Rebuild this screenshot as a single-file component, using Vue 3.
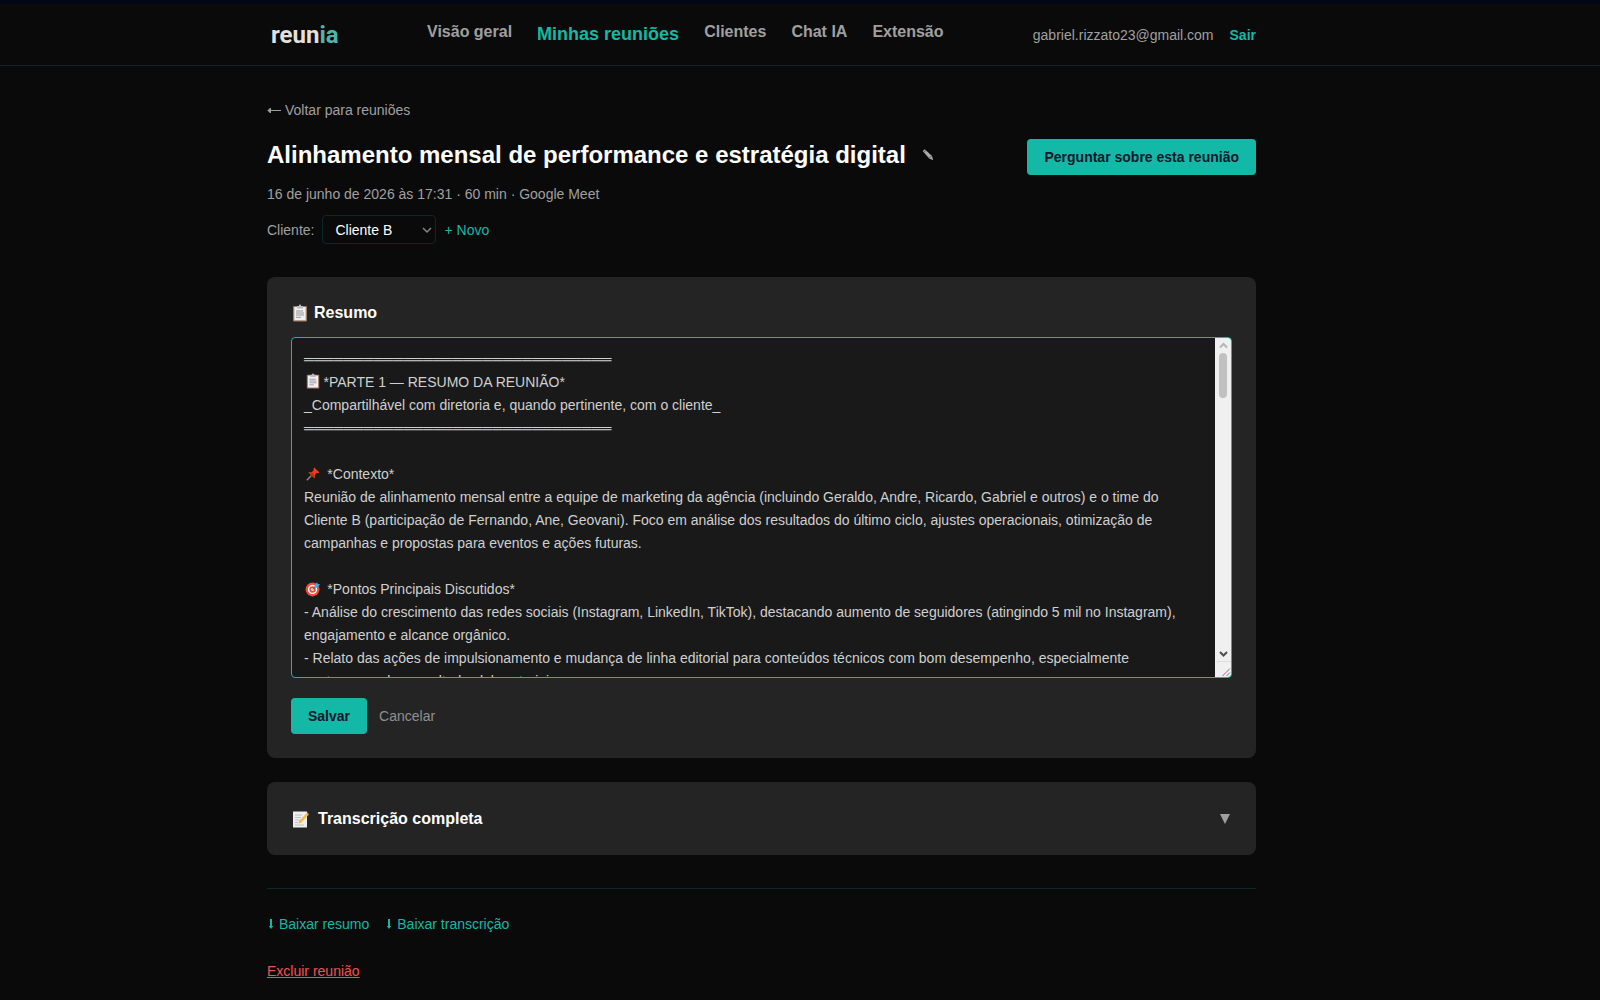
<template>
  <div class="page">
    <header class="topbar">
      <div class="container topbar-inner">
        <a class="logo" href="#">reun<span class="logo-accent">ia</span></a>
        <nav class="nav">
          <a
            v-for="item in navItems"
            :key="item"
            href="#"
            :class="['nav-link', { active: item === activeItem }]"
          >{{ item }}</a>
        </nav>
        <div class="account">
          <span>gabriel.rizzato23@gmail.com</span>
          <button type="button" class="logout">Sair</button>
        </div>
      </div>
    </header>

    <main class="main">
      <div class="container">
        <a class="back" href="#">
          <svg width="14" height="8" viewBox="0 0 14 8" aria-hidden="true">
            <path d="M3.5 2 L1 4.5 L3.5 7 Z M1 4.5 H14" fill="currentColor" stroke="currentColor" />
          </svg>
          Voltar para reuniões
        </a>

        <div class="heading">
          <h1 class="title">Alinhamento mensal de performance e estratégia digital</h1>
          <button type="button" class="edit" aria-label="Editar título">
            <svg width="12" height="12" viewBox="0 0 12 12">
              <path d="M.6 2 L2.8 .2 L10 7 L11.2 11.2 L7.2 9.4 Z" fill="#aaa" />
              <path d="M1.8 3.2 L4 1.3 M7.2 9 L9.7 7" stroke="#444" stroke-width=".7" />
            </svg>
          </button>
          <button type="button" class="btn ask">Perguntar sobre esta reunião</button>
        </div>

        <p class="meta">16 de junho de 2026 às 17:31 · 60 min · Google Meet</p>

        <div class="client">
          <label for="client">Cliente:</label>
          <div class="select-wrap">
            <select id="client" v-model="client" class="select">
              <option>Cliente B</option>
            </select>
            <svg class="select-arrow" width="10" height="6" viewBox="0 0 10 6" aria-hidden="true">
              <path d="M1 1 L5 5 L9 1" fill="none" stroke="#8a8a8a" stroke-width="1.4" />
            </svg>
          </div>
          <button type="button" class="new-client">+ Novo</button>
        </div>

        <section class="card">
          <h2 class="card-title">
            <svg class="emoji" viewBox="0 0 18 18" aria-hidden="true">
              <rect x="2" y="2" width="14" height="15.5" rx="1" fill="#a27c62" />
              <rect x="3.3" y="3" width="11.4" height="13.3" fill="#f0eff2" />
              <path d="M6 4.4 V2 H7.8 Q8 .6 9 .6 T10.2 2 H12 V4.4 Z" fill="#b9bcc2" />
              <path d="M5 7 H12 M5 9 H13 M5 11 H13 M5 13.3 H10" stroke="#96969c" />
            </svg>
            Resumo
          </h2>

          <div class="editor">
            <textarea v-model="summary" class="summary" aria-label="Resumo" spellcheck="false"></textarea>
            <svg class="mark mark-clipboard" viewBox="0 0 18 18" aria-hidden="true">
              <rect x="2" y="2" width="14" height="15.5" rx="1" fill="#a27c62" />
              <rect x="3.3" y="3" width="11.4" height="13.3" fill="#f0eff2" />
              <path d="M6 4.4 V2 H7.8 Q8 .6 9 .6 T10.2 2 H12 V4.4 Z" fill="#b9bcc2" />
              <path d="M5 7 H12 M5 9 H13 M5 11 H13 M5 13.3 H10" stroke="#96969c" />
            </svg>
            <svg class="mark mark-pin" viewBox="0 0 18 18" aria-hidden="true">
              <path d="M2 16 L7 11" stroke="#8b8b8b" stroke-width="1.5" />
              <path d="M10.5 1.8 L16.3 7.3 L14.6 8.2 L13 8 L11.2 10 L11 14 L3.8 7.3 L7.8 6.8 L9.8 4.8 L9.5 3 Z" fill="#e8401c" />
              <path d="M8 7 L11 10 L11 14 L3.8 7.3 Z" fill="#c93212" />
            </svg>
            <svg class="mark mark-target" viewBox="0 0 18 18" aria-hidden="true">
              <circle cx="8.5" cy="9.5" r="7.8" fill="#ee4b34" />
              <circle cx="8.5" cy="9.5" r="5.2" fill="#fff" />
              <circle cx="8.5" cy="9.5" r="3.6" fill="#ee4b34" />
              <circle cx="8.5" cy="9.5" r="1.6" fill="#fff" />
              <path d="M8.5 9.5 L14 4" stroke="#25739b" stroke-width="1.3" />
              <path d="M11 5 L13.5 1.5 L14.5 3.5 L17 4 L13.5 7.3 L11 7 Z" fill="#2db4e8" />
            </svg>
            <div class="scrollbar" aria-hidden="true">
              <svg width="15" height="15" viewBox="0 0 15 15">
                <path d="M4 9.5 L7.5 6 L11 9.5" fill="none" stroke="#b5b5b5" stroke-width="2" />
              </svg>
              <div class="thumb"></div>
              <svg class="down" width="15" height="15" viewBox="0 0 15 15">
                <path d="M4 6 L7.5 9.5 L11 6" fill="none" stroke="#505050" stroke-width="2" />
              </svg>
              <svg class="grip" width="15" height="15" viewBox="0 0 15 15">
                <path d="M6.5 14 L14 6.5 M10.5 14 L14 10.5" stroke="#777" />
              </svg>
            </div>
          </div>

          <div class="actions">
            <button type="button" class="btn">Salvar</button>
            <button type="button" class="cancel">Cancelar</button>
          </div>
        </section>

        <section class="card">
          <button type="button" class="toggle">
            <svg class="emoji" viewBox="0 0 18 18" aria-hidden="true">
              <rect x="2" y="1.5" width="14" height="16" fill="#efeff1" />
              <path d="M4 5 H11 M4 7.5 H10 M4 10 H9 M4 12.5 H7 M4 15 H13" stroke="#b5b5ba" stroke-width=".8" />
              <path d="M7.4 13.8 L8.2 10.8 L15.6 3.2 L17.5 5 L10.2 12.8 Z" fill="#f2bd4b" />
              <path d="M15.6 3.2 L16.5 2.3 L18 4.2 L17.3 5 Z" fill="#d98078" />
            </svg>
            Transcrição completa
            <svg class="chevron" width="10" height="10" viewBox="0 0 10 10" aria-hidden="true">
              <path d="M0 0 H10 L5 10 Z" fill="#a0a0a0" />
            </svg>
          </button>
        </section>

        <footer class="footer">
          <div class="downloads">
            <a v-for="item in downloads" :key="item" class="download" href="#">
              <svg width="8" height="12" viewBox="0 0 8 12" aria-hidden="true">
                <path d="M3 1 H5 V8 H6.2 L4 11 L1.8 8 H3 Z" fill="currentColor" />
              </svg>
              {{ item }}
            </a>
          </div>
          <button type="button" class="delete">Excluir reunião</button>
        </footer>
      </div>
    </main>
  </div>
</template>

<script setup>
import { ref } from 'vue'

const navItems = ['Visão geral', 'Minhas reuniões', 'Clientes', 'Chat IA', 'Extensão']
const activeItem = 'Minhas reuniões'
const downloads = ['Baixar resumo', 'Baixar transcrição']
const client = ref('Cliente B')

const rule = '═'.repeat(31)
// espaço para o ícone no início da linha
const indent = (n) => '\u00a0'.repeat(n)

const summary = ref([
  rule,
  `${indent(5)}*PARTE 1 — RESUMO DA REUNIÃO*`,
  '_Compartilhável com diretoria e, quando pertinente, com o cliente_',
  rule,
  '',
  `${indent(6)}*Contexto*`,
  'Reunião de alinhamento mensal entre a equipe de marketing da agência (incluindo Geraldo, Andre, Ricardo, Gabriel e outros) e o time do Cliente B (participação de Fernando, Ane, Geovani). Foco em análise dos resultados do último ciclo, ajustes operacionais, otimização de campanhas e propostas para eventos e ações futuras.',
  '',
  `${indent(6)}*Pontos Principais Discutidos*`,
  '- Análise do crescimento das redes sociais (Instagram, LinkedIn, TikTok), destacando aumento de seguidores (atingindo 5 mil no Instagram), engajamento e alcance orgânico.',
  '- Relato das ações de impulsionamento e mudança de linha editorial para conteúdos técnicos com bom desempenho, especialmente postagens sobre resultados laboratoriais.',
].join('\n'))
</script>

<style>
body { margin: 0; background: #0a0a0a; }
</style>

<style scoped>
.page {
  min-height: 100vh; box-sizing: border-box; border-top: 4px solid #020617;
  background: #0a0a0a; color: #a0a0a0;
  font: 14px/24px "Liberation Sans", Arial, sans-serif;
}
button, select, textarea { font: inherit; }
button { padding: 0; border: 0; background: none; color: inherit; cursor: pointer; }
a { color: inherit; text-decoration: none; }
h1, h2, p { margin: 0; }
svg { flex-shrink: 0; }
.container { max-width: 989px; margin: 0 auto; }
.topbar, .main { padding-right: 77px; }

/* ── Topo ── */
.topbar { border-bottom: 1px solid #0b2a27; }
.topbar-inner { display: flex; align-items: center; height: 61px; }
.logo { width: 160px; padding-left: 4px; box-sizing: border-box; font: bold 24px/28px Roboto, sans-serif; color: #e4e0dd; }
.logo-accent { color: #4fb3aa; }
.nav {
  display: flex; align-items: flex-start; gap: 25px; margin-top: -2px;
  font-size: 16px; font-weight: bold;
}
.nav-link.active { color: #14b8a6; font-size: 18px; line-height: 28px; }
.account { display: flex; gap: 16px; margin-left: auto; }
.logout { color: #14b8a6; font-weight: bold; }

/* ── Cabeçalho da reunião ── */
.back { display: inline-flex; align-items: center; gap: 4px; margin-top: 32px; }
.heading { display: flex; align-items: flex-start; margin-top: 17px; }
.title { font-size: 24px; line-height: 32px; color: #fff; }
.edit { display: flex; align-items: center; height: 32px; margin-left: 16px; }
.btn {
  height: 36px; padding: 0 17px; border-radius: 4px;
  background: #14b8a6; color: #0f172a; font-weight: bold;
}
.ask { margin-left: auto; }
.meta { margin-top: 7px; }
.client { display: flex; align-items: center; gap: 8px; margin-top: 9px; }
.select-wrap { position: relative; }
.select {
  display: block; width: 114px; height: 29px; padding: 0 12px; appearance: none;
  border: 1px solid #0b2a27; border-radius: 4px; background: #0a0a0a; color: #fff;
}
.select-arrow { position: absolute; right: 4px; top: 12px; pointer-events: none; }
.new-client { color: #14b8a6; }

/* ── Cartões ── */
.card { margin-top: 24px; padding: 24px; border-radius: 8px; background: #242424; }
.client + .card { margin-top: 33px; }
.card-title, .toggle {
  display: flex; align-items: center; gap: 5px;
  font-size: 16px; line-height: 24px; font-weight: bold; color: #fff;
}
.emoji { width: 18px; height: 18px; }
.toggle { width: 100%; height: 25px; gap: 9px; }
.chevron { margin: 0 2px 0 auto; }

.editor {
  position: relative; display: flex; overflow: hidden; height: 339px; margin-top: 12px;
  border: 1px solid #14b8a6; border-radius: 4px; background: #191919;
}
.summary {
  flex: 1; min-width: 0; padding: 10px 24px 0 12px; border: 0; outline: 0; resize: none; overflow: hidden;
  background: transparent; color: #d0d0d0; line-height: 23px;
}
.mark { position: absolute; left: 13px; width: 16px; height: 16px; pointer-events: none; }
.mark-clipboard { top: 35px; }
.mark-pin { top: 128px; }
.mark-target { top: 243px; }
.scrollbar { display: flex; flex-direction: column; align-items: center; width: 16px; background: #f0f0f0; }
.thumb { width: 8px; height: 45px; border-radius: 4px; background: #c1c1c1; }
.down { margin-top: auto; }
.grip { border-top: 1px solid #ddd; }

.actions { display: flex; gap: 12px; margin-top: 20px; }
.cancel { color: #8f8f8f; }

/* ── Rodapé ── */
.footer { margin-top: 33px; padding: 23px 0; border-top: 1px solid #0b2a27; }
.downloads { display: flex; gap: 16px; }
.download { display: flex; align-items: center; gap: 4px; color: #14b8a6; }
.delete { margin-top: 23px; color: #f05252; text-decoration: underline; }
</style>
